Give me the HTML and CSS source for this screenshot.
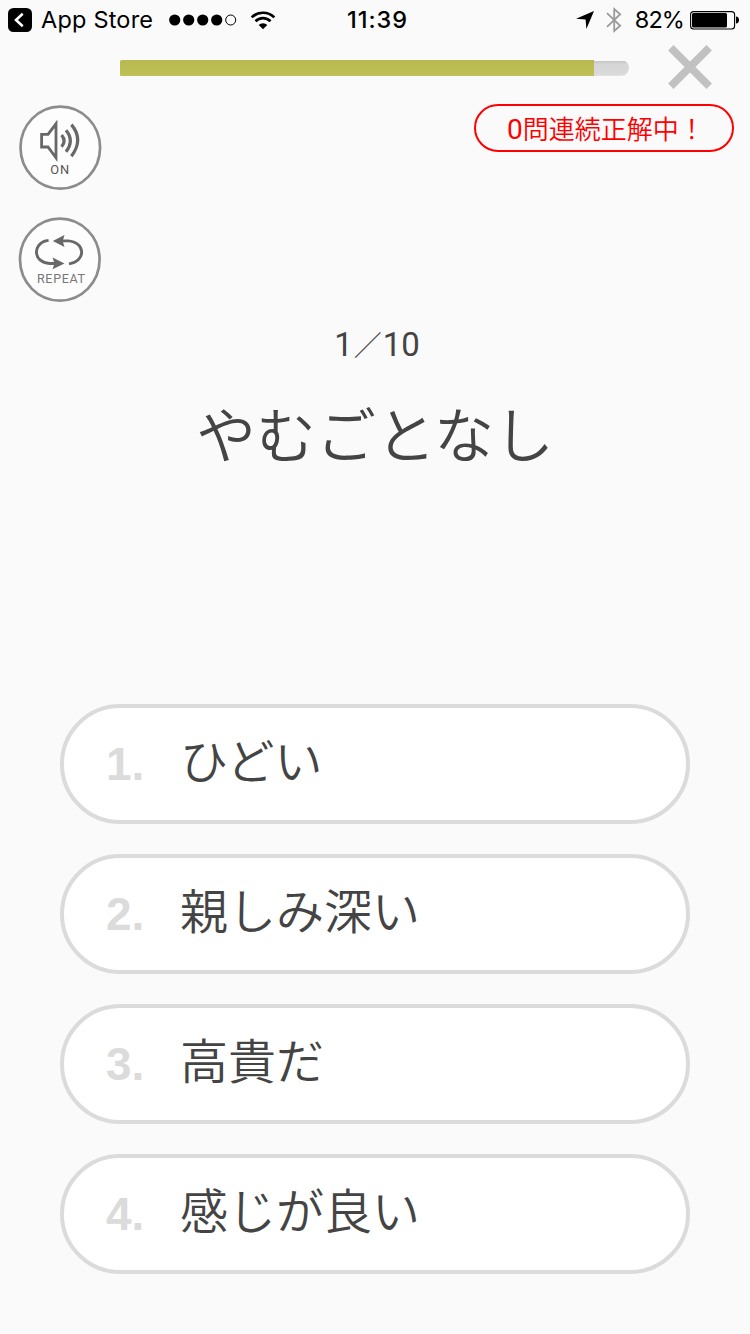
FILE: index.html
```html
<!DOCTYPE html>
<html lang="ja">
<head>
<meta charset="utf-8">
<title>やむごとなし</title>
<link rel="stylesheet" href="styles.css">
</head>
<body>
<div class="screen">
  <header class="status">
    <div class="status-left">
      <svg class="back" width="24" height="24" viewBox="0 0 24 24"><rect width="24" height="24" rx="5.5"/><path d="M14.7 5.7L8 12l6.7 6.3" fill="none" stroke="#fff" stroke-width="2.6"/></svg>
      <span class="carrier">App Store</span>
      <svg class="signal" width="68" height="12" viewBox="0 0 68 12"><circle cx="5.7" cy="6" r="5.6"/><circle cx="19.7" cy="6" r="5.6"/><circle cx="33.7" cy="6" r="5.6"/><circle cx="47.7" cy="6" r="5.6"/><circle cx="61.7" cy="6" r="5" fill="none" stroke="#000" stroke-width="1"/></svg>
      <svg class="wifi" width="26" height="20" viewBox="0 0 26 20"><g fill="none" stroke="#000" stroke-width="2.7"><path d="M1.7 7.4a16 16 0 0 1 22.6 0"/><path d="M5.5 11.3a10.6 10.6 0 0 1 15 0"/></g><path d="M13 19.2L8.7 14.9a6.1 6.1 0 0 1 8.6 0z"/></svg>
    </div>
    <span class="clock">11:39</span>
    <div class="status-right">
      <svg class="locate" width="18" height="18" viewBox="0 0 18 18"><path d="M18 0L10.4 18 9.6 8.6 0 7.8z"/></svg>
      <svg class="bluetooth" width="16" height="26" viewBox="0 0 16 26"><path d="M1 6.2l13.2 12.6L8.2 24V2l6 5.2L1 19.8" fill="none" stroke="#9b9b9b" stroke-width="1.8"/></svg>
      <span class="percent">82%</span>
      <svg class="battery" width="49" height="20" viewBox="0 0 49 20"><rect x=".6" y="1.6" width="44" height="17.4" rx="3" fill="none" stroke="#000" stroke-width="1.1"/><rect x="2" y="3" width="35" height="14.6" rx="1.5"/><path d="M46 6.5c4 0 4 7 0 7z"/></svg>
    </div>
  </header>

  <div class="progress-row">
    <div class="track"><div class="fill"></div></div>
    <svg class="close" width="44" height="44" viewBox="0 0 44 44"><path d="M2.8 2.8l38.4 38.4M41.2 2.8L2.8 41.2" stroke="#c1c1c1" stroke-width="7.6"/></svg>
  </div>

  <div class="tools-row">
    <div class="tools">
      <svg class="tool" width="84" height="86" viewBox="0 0 84 86">
        <ellipse cx="42.3" cy="42.6" rx="39.8" ry="41" class="ring"/>
        <g fill="none" stroke="#686868" stroke-width="2.8">
          <path d="M23.6 29.4h6.4L38 18.8v34L30 42h-6.4z"/>
          <path d="M43.6 30q5 6 0 11.8M48 25.2q8.6 10.2 0 21.6M53.4 19.6q12.6 15 0 31.6" stroke-width="3.2"/>
        </g>
        <text x="41.7" y="68.9" class="tool-on" textLength="19">ON</text>
      </svg>
      <svg class="tool" width="84" height="86" viewBox="0 0 84 86">
        <ellipse cx="41.8" cy="42.6" rx="39.8" ry="41" class="ring"/>
        <g fill="none" stroke="#686868" stroke-width="2.9">
          <path d="M30.6 23.6h-2c-14 3-14 21.8 3 22.9h6"/>
          <path d="M44 23.9h6c17.5 1 18.5 20.2 1 23"/>
        </g>
        <path d="M34.8 23.9L46.5 18l-1.8 5.9 1.8 6zM46.5 46.6L34.6 40.6l1.8 6-1.8 5.7z" fill="#686868"/>
        <text x="43" y="65.8" class="tool-repeat" textLength="48">REPEAT</text>
      </svg>
    </div>
    <div class="streak"><span class="zero">0</span>問連続正解中！</div>
  </div>

  <main class="quiz">
    <div class="count"><span>1</span><span class="slash">／</span><span>10</span></div>
    <h1 class="word">やむごとなし</h1>
    <div class="options">
      <div class="option"><b class="num">1.</b><span class="answer">ひどい</span></div>
      <div class="option"><b class="num">2.</b><span class="answer">親しみ深い</span></div>
      <div class="option"><b class="num">3.</b><span class="answer">高貴だ</span></div>
      <div class="option"><b class="num">4.</b><span class="answer">感じが良い</span></div>
    </div>
  </main>
</div>
</body>
</html>
```
FILE: styles.css
```css
* { box-sizing: border-box; }
body { margin: 0; background: #fafafa; }
svg { display: block; flex: none; }
.screen {
  width: 750px; height: 1334px; overflow: hidden;
  display: flex; flex-direction: column;
  background: #fafafa; color: #444;
  font-family: "Noto Sans CJK JP", sans-serif;
}
.status {
  height: 40px; flex: none; padding: 0 11px 0 8px;
  display: grid; grid-template: 40px / 335px 69px 1fr; align-items: center;
  color: #000; font: 24px/42px Inter, sans-serif; white-space: nowrap;
}
.status-left, .status-right { display: flex; align-items: center; height: 40px; }
.status-right { justify-content: flex-end; }
.carrier { width: 112px; margin-left: 9px; font-size: 23.5px; letter-spacing: .2px; }
.signal { margin-left: 16px; }
.wifi { margin-left: 13px; }
.clock { font-size: 23.5px; font-weight: 500; text-align: center; letter-spacing: 1px; }
.bluetooth { margin-left: 12px; }
.percent { margin: 0 6px 0 13px; font-size: 23.5px; letter-spacing: -.9px; }

.progress-row { height: 64px; flex: none; padding: 6px 38px 0 120px; display: flex; justify-content: space-between; }
.track { width: 509px; height: 16px; margin-top: 14px; border-radius: 2px 10px 10px 2px; overflow: hidden; background: linear-gradient(#fafafa 1px, #c4c4c4 1px, #d6d6d6 4px, #d9d9d9 14px, #e4e4e4); }
.fill { width: 474px; height: 16px; background: linear-gradient(#b8b94f, #bfc056); }
.close { margin-top: -1px; }

.tools-row { height: 216px; flex: none; padding: 0 16px 0 18px; display: flex; justify-content: space-between; align-items: flex-start; }
.tools { display: flex; flex-direction: column; gap: 26px; padding-top: 1px; }
.ring { fill: #fdfdfd; stroke: #8c8c8c; stroke-width: 2.7; }
.tool text { font-family: Roboto, sans-serif; text-anchor: middle; }
.tool-on { font-size: 12.8px; fill: #555; }
.tool-repeat { font-size: 12.5px; fill: #777; }
.streak { width: 260px; height: 48px; border: 2px solid #f00; border-radius: 24px; padding-left: 31px; color: #f00; font-size: 26px; line-height: 43px; font-weight: 350; white-space: nowrap; }
.zero { font-family: Roboto, sans-serif; font-size: 28px; font-weight: 400; }

.quiz { display: flex; flex-direction: column; align-items: center; color: #444; }
.count { height: 50px; display: flex; gap: 1px; font: 400 33px/50px Roboto, sans-serif; padding-left: 4px; }
.slash { font: 350 28px/48px "Noto Sans CJK JP", sans-serif; }
.word { height: 90px; margin: 17px 0 0; font-size: 60px; line-height: 90px; font-weight: 350; }
.options { width: 630px; margin-top: 227px; display: flex; flex-direction: column; gap: 30px; }
.option { height: 120px; border: 4px solid #dbdbdb; border-radius: 60px; background: #fff; padding-left: 42px; display: flex; }
.num { width: 74px; color: #dbdbdb; font: 700 46px/112px "Liberation Sans", sans-serif; }
.answer { font-size: 48px; line-height: 100px; font-weight: 350; }
```
